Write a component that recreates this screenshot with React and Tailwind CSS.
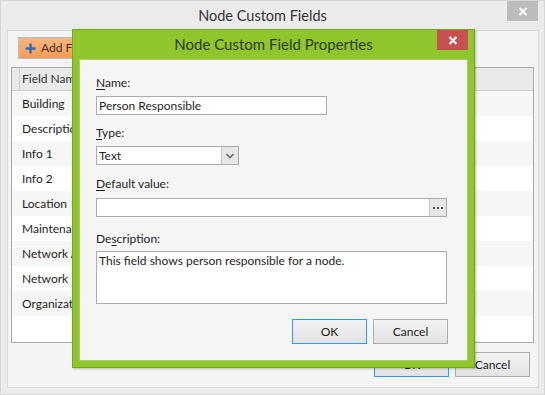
import React from 'react';

const rows = [
  'Building',
  'Description',
  'Info 1',
  'Info 2',
  'Location',
  'Maintenance',
  'Network Address',
  'Network Interface',
  'Organization',
];

const CloseX = ({ color = '#ffffff' }) => (
  <svg width="10" height="9" viewBox="0 0 10 9">
    <path d="M1.5 1 L8.5 8 M8.5 1 L1.5 8" stroke={color} strokeWidth="2" />
  </svg>
);

const WinButton = ({ children, focused }) => (
  <div
    className={`w-[75px] h-[25px] flex items-center justify-center text-[12px] text-[#222] bg-gradient-to-b from-[#f2f2f2] to-[#e3e3e3] border ${
      focused ? 'border-[#3399ff]' : 'border-[#adadad]'
    }`}
  >
    {children}
  </div>
);

const Label = ({ pre, u, post, className }) => (
  <div className={`h-[16px] leading-[16px] text-[12px] text-[#1e1e1e] ${className}`}>
    {pre}
    <span className="underline underline-offset-2">{u}</span>
    {post}
  </div>
);

const App = () => {
  return (
    <div className="relative w-[545px] h-[395px] bg-[#ebebeb] border border-[#d6d6d6] overflow-hidden font-['Lato','Noto_Sans',sans-serif]">
      {/* main window title */}
      <div className="relative h-[29px] flex items-center justify-center pr-[20px]">
        <span className="text-[14.5px] text-[#333]">Node Custom Fields</span>
        <div className="absolute right-[6px] top-0 w-[31px] h-[20px] bg-[#bcbcbc] flex items-center justify-center">
          <CloseX />
        </div>
      </div>

      {/* main window body */}
      <div className="ml-[6px] w-[532px] h-[358px] border border-[#d9d9d9] bg-[#f4f4f4] flex flex-col">
        <div className="ml-[10px] mt-[6px] w-[110px] h-[22px] border border-[#b3bfcc] bg-gradient-to-b from-[#ffb77f] to-[#ff9a52] flex items-center pl-[6px] gap-[5px] text-[12px] text-[#333]">
          <svg width="11" height="11" viewBox="0 0 11 11">
            <path d="M5.5 0.5 V10.5 M0.5 5.5 H10.5" stroke="#1d6fcf" strokeWidth="2.4" />
          </svg>
          <span>Add Field</span>
        </div>

        <div className="ml-[3px] mt-[8px] w-[523px] h-[276px] border border-[#a9a9a9] bg-white flex flex-col">
          <div className="h-[23px] flex bg-[#e9e9e9] border-b border-[#d0d0d0] text-[12px] text-[#333]">
            <div className="w-[8px] border-r border-[#cfcfcf]" />
            <div className="flex-1 flex items-center pl-[2px]">Field Name</div>
          </div>
          {rows.map((r, i) => (
            <div
              key={r}
              className={`h-[25px] flex items-center pl-[10px] text-[12px] text-[#1e1e1e] ${
                i % 2 === 0 ? 'bg-[#f6f6f6]' : 'bg-white'
              }`}
            >
              {r}
            </div>
          ))}
        </div>

        <div className="mt-[9px] mr-[8px] flex justify-end gap-[6px]">
          <WinButton focused>OK</WinButton>
          <WinButton>Cancel</WinButton>
        </div>
      </div>

      {/* properties dialog */}
      <div className="absolute left-[71px] top-[28px] w-[403px] h-[339px] bg-[#8fc62b] border border-[#74a620] flex flex-col px-[6px] pb-[6px] shadow-[1px_1px_2px_rgba(0,0,0,0.25)]">
        <div className="relative h-[29px] flex items-center justify-center">
          <span className="text-[15px] text-[#2f3a22]">Node Custom Field Properties</span>
          <div className="absolute right-[0px] top-0 w-[31px] h-[20px] bg-[#c75050] flex items-center justify-center">
            <CloseX />
          </div>
        </div>

        <div className="flex-1 bg-[#f5f5f5] border border-[#a9cf62] pl-[16px] pt-[15px] flex flex-col">
          <Label u="N" post="ame:" />
          <div className="mt-[5px] w-[231px] h-[19px] border border-[#ababab] bg-white flex items-center pl-[2px] text-[12px] text-[#1e1e1e]">
            Person Responsible
          </div>

          <Label u="T" post="ype:" className="mt-[10px]" />
          <div className="mt-[5px] w-[143px] h-[19px] border border-[#ababab] bg-white flex text-[12px] text-[#1e1e1e]">
            <div className="flex-1 flex items-center pl-[2px]">Text</div>
            <div className="w-[17px] bg-[#e6e6e6] border-l border-[#c4c4c4] flex items-center justify-center">
              <svg width="8" height="6" viewBox="0 0 8 6">
                <path d="M0.5 1 L4 4.5 L7.5 1" stroke="#707070" strokeWidth="1.6" fill="none" />
              </svg>
            </div>
          </div>

          <Label u="D" post="efault value:" className="mt-[11px]" />
          <div className="mt-[6px] w-[351px] h-[19px] border border-[#ababab] bg-white flex">
            <div className="flex-1" />
            <div className="w-[17px] bg-[#e6e6e6] border-l border-[#c4c4c4] flex items-center justify-center gap-[2px]">
              <span className="w-[2px] h-[2px] bg-[#555]" />
              <span className="w-[2px] h-[2px] bg-[#555]" />
              <span className="w-[2px] h-[2px] bg-[#555]" />
            </div>
          </div>

          <Label pre="De" u="s" post="cription:" className="mt-[14px]" />
          <div className="mt-[4px] w-[351px] h-[53px] border border-[#ababab] bg-white pl-[2px] pt-[1px] text-[12px] leading-[16px] text-[#1e1e1e]">
            This field shows person responsible for a node.
          </div>

          <div className="mt-[15px] w-[352px] flex justify-end gap-[6px]">
            <WinButton focused>OK</WinButton>
            <WinButton>Cancel</WinButton>
          </div>
        </div>
      </div>
    </div>
  );
};

export default App;
